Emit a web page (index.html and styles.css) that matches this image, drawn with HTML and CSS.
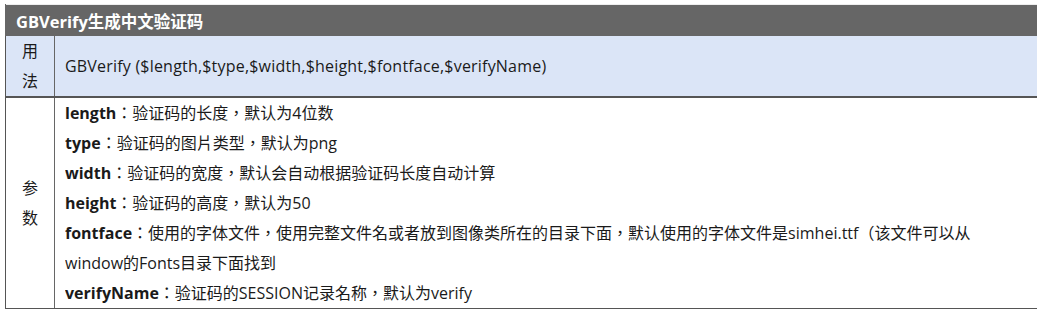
FILE: index.html
```html
<!DOCTYPE html>
<html>
<head>
<meta charset="utf-8">
<link rel="stylesheet" href="styles.css">
</head>
<body>
<table class="doc">
  <tr class="head"><th colspan="2">GBVerify生成中文验证码</th></tr>
  <tr class="usage">
    <td class="label"><div class="ln">用</div><div class="ln">法</div></td>
    <td class="content sig">GBVerify ($length,$type,$width,$height,$fontface,$verifyName)</td>
  </tr>
  <tr class="params">
    <td class="label"><div class="ln">参</div><div class="ln">数</div></td>
    <td class="content">
      <div class="ln"><b>length</b>：验证码的长度，默认为4位数</div>
      <div class="ln"><b>type</b>：验证码的图片类型，默认为png</div>
      <div class="ln"><b>width</b>：验证码的宽度，默认会自动根据验证码长度自动计算</div>
      <div class="ln"><b>height</b>：验证码的高度，默认为50</div>
      <div class="ln two"><b>fontface</b>：使用的字体文件，使用完整文件名或者放到图像类所在的目录下面，默认使用的字体文件是simhei.ttf（该文件可以从window的Fonts目录下面找到</div>
      <div class="ln"><b>verifyName</b>：验证码的SESSION记录名称，默认为verify</div>
    </td>
  </tr>
</table>
</body>
</html>
```
FILE: styles.css
```css
html, body { margin: 0; background: #fff; }
body { padding: 4px 0 0 5px; }
.doc {
  border-collapse: collapse;
  width: 1032px;
  font-family: "Open Sans", "Noto Sans CJK TC", sans-serif;
  font-size: 16px;
  color: #1a1a1a;
  border-top: 1px solid #eeeeee;
}
.doc th, .doc td { padding: 0; }
.head th {
  background: #666;
  color: #fff;
  text-align: left;
  font-weight: bold;
  font-size: 16.5px;
  height: 31px;
  padding-left: 10px;
  border-left: 1px solid #666;
}
.ln { height: 30px; line-height: 30px; overflow: hidden; }
.ln.two { height: 60px; }
.usage td { background: #dbe5f7; border-bottom: 2px solid #555; height: 60px; }
.label {
  width: 48px;
  text-align: center;
  border-left: 1px solid #555;
  border-right: 1px solid #666;
  vertical-align: middle;
}
.content { padding: 0 40px 0 10px !important; vertical-align: middle; }
.sig { letter-spacing: 0.2px; }
.params td { border-bottom: 1px solid #555; }
.content b { font-weight: bold; }
```
